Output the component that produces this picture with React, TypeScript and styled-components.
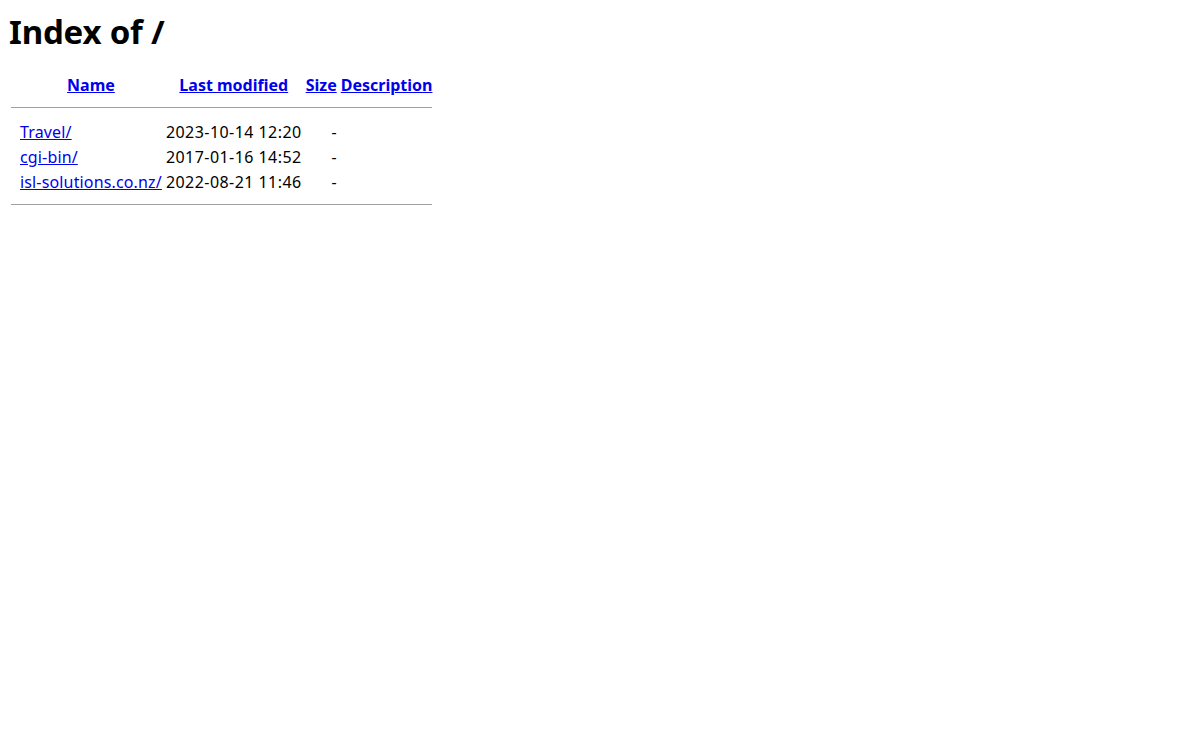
import styled, { createGlobalStyle } from 'styled-components';

const GlobalStyle = createGlobalStyle`
  html, body {
    margin: 0;
    padding: 0;
    background: #fff;
  }
  body {
    padding: 8px;
    font-family: 'Noto Sans', 'Open Sans', sans-serif;
    color: #000;
  }
`;

interface Entry {
  name: string;
  modified: string;
  size: string;
  description: string;
}

const entries: Entry[] = [
  { name: 'Travel/', modified: '2023-10-14 12:20', size: '-', description: '' },
  { name: 'cgi-bin/', modified: '2017-01-16 14:52', size: '-', description: '' },
  { name: 'isl-solutions.co.nz/', modified: '2022-08-21 11:46', size: '-', description: '' },
];

const Title = styled.h1`
  margin: 4px 0 0 1px;
  font-size: 33px;
  line-height: 40px;
  font-weight: 700;
  letter-spacing: -0.2px;
`;

const Listing = styled.table`
  margin-top: 20px;
  border-spacing: 2px;
  font-size: 16px;
`;

const HeadCell = styled.th`
  padding: 1px;
  line-height: 21px;
  font-weight: 700;
  text-align: center;
`;

const Cell = styled.td<{ $align?: string; $spacing?: number }>`
  padding: 1px;
  line-height: 21px;
  white-space: nowrap;
  text-align: ${(p) => p.$align ?? 'left'};
  letter-spacing: ${(p) => (p.$spacing ? `${p.$spacing}px` : 'normal')};
`;

const IconCell = styled.td`
  width: 5px;
  padding: 1px;
`;

const Link = styled.a`
  color: #0000ee;
  text-decoration: underline;
`;

const RuleCell = styled.th`
  padding: 0 1px;
`;

const Rule = styled.hr<{ $gap?: number }>`
  margin: 8px 0 ${(p) => 8 + (p.$gap ?? 0)}px;
  border: none;
  border-top: 1px solid #a0a0a0;
  height: 0;
`;

const RuleRow = ({ gap }: { gap?: number }) => (
  <tr>
    <RuleCell colSpan={5}>
      <Rule $gap={gap} />
    </RuleCell>
  </tr>
);

const App = () => {
  return (
    <>
      <GlobalStyle />
      <Title>Index of /</Title>
      <Listing>
        <tbody>
          <tr>
            <IconCell as="th" />
            <HeadCell>
              <Link href="#">Name</Link>
            </HeadCell>
            <HeadCell>
              <Link href="#">Last modified</Link>
            </HeadCell>
            <HeadCell>
              <Link href="#">Size</Link>
            </HeadCell>
            <HeadCell>
              <Link href="#">Description</Link>
            </HeadCell>
          </tr>
          <RuleRow gap={3} />
          {entries.map((e) => (
            <tr key={e.name}>
              <IconCell />
              <Cell $spacing={0.15}>
                <Link href="#">{e.name}</Link>
              </Cell>
              <Cell $align="right" $spacing={0.45}>
                {e.modified}
              </Cell>
              <Cell $align="right">{e.size}</Cell>
              <Cell>{e.description}&nbsp;</Cell>
            </tr>
          ))}
          <RuleRow />
        </tbody>
      </Listing>
    </>
  );
};

export default App;
